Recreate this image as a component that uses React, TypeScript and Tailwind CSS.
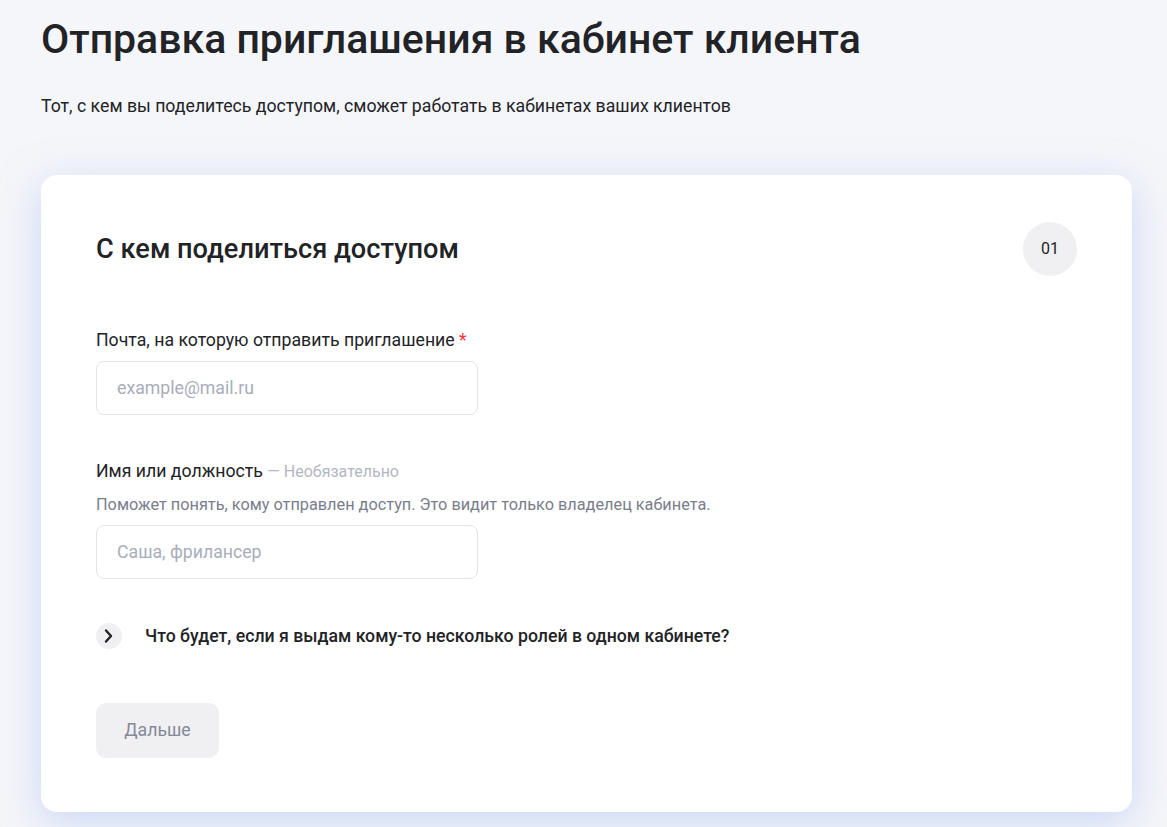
import React from "react";

export default function App() {
  return (
    <div className="min-h-[827px] w-full bg-[#f5f6fa] text-[#222326]" style={{ fontFamily: "Roboto, 'Noto Sans', sans-serif" }}>
      <div className="px-[41px] pt-[15px] pb-[16px]">
        <h1 className="text-[41px] leading-[48px] font-medium text-[#222326]">
          Отправка приглашения в кабинет клиента
        </h1>
        <p className="mt-[30px] text-[17.7px] leading-[26px] text-[#222326]">
          Тот, с кем вы поделитесь доступом, сможет работать в кабинетах ваших клиентов
        </p>
        <div className="mt-[56px] w-[1091px] rounded-[16px] bg-white px-[55px] pt-[47px] pb-[54px] shadow-[0_10px_40px_rgba(160,185,240,0.5)]">
          <div className="flex h-[54px] items-center justify-between">
            <h2 className="text-[27.2px] leading-[34px] font-medium text-[#222326]">С кем поделиться доступом</h2>
            <div className="flex h-[54px] w-[54px] items-center justify-center rounded-full bg-[#f0f0f3] text-[16px] text-[#222326]">
              01
            </div>
          </div>

          <div className="mt-[51px]">
            <div className="text-[17.7px] leading-[26px] text-[#222326]">
              Почта, на которую отправить приглашение <span className="text-[#f0393c]">*</span>
            </div>
            <input
              className="mt-[8px] block h-[54px] w-[382px] rounded-[8px] border border-[#e3e4ea] bg-white px-[20px] text-[17.7px] text-[#222326] outline-none placeholder:text-[#a9adbb]"
              placeholder="example@mail.ru"
            />
          </div>

          <div className="mt-[43px]">
            <div className="text-[17.7px] leading-[26px] text-[#222326]">
              Имя или должность <span className="text-[16px] text-[#b4b7c3]">— Необязательно</span>
            </div>
            <div className="mt-[8px] text-[16.3px] leading-[24px] text-[#7a7d8c]">
              Поможет понять, кому отправлен доступ. Это видит только владелец кабинета.
            </div>
            <input
              className="mt-[8px] block h-[54px] w-[382px] rounded-[8px] border border-[#e3e4ea] bg-white px-[20px] text-[17.7px] text-[#222326] outline-none placeholder:text-[#a9adbb]"
              placeholder="Саша, фрилансер"
            />
          </div>

          <div className="mt-[44px] flex h-[26px] items-center gap-[23px]">
            <div className="h-[26px] w-[26px] rounded-full bg-[#f0f0f3]">
              <svg width="26" height="26" viewBox="0 0 26 26" fill="none">
                <path d="M10 7.5 L15 13 L10 18.5" stroke="#222326" strokeWidth="2.4" strokeLinecap="round" strokeLinejoin="round" />
              </svg>
            </div>
            <div className="text-[17.7px] leading-[26px] font-medium text-[#222326]">
              Что будет, если я выдам кому-то несколько ролей в одном кабинете?
            </div>
          </div>

          <button className="mt-[54px] flex h-[55px] w-[123px] items-center justify-center rounded-[10px] bg-[#f0f0f3] text-[17.7px] text-[#858898]">
            Дальше
          </button>
        </div>
      </div>
    </div>
  );
}
